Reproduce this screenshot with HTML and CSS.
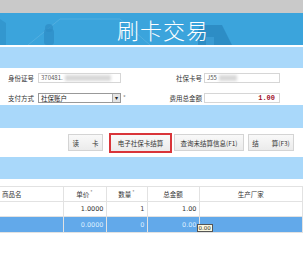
FILE: index.html
```html
<!DOCTYPE html>
<html lang="zh-CN">
<head>
  <meta charset="UTF-8">
  <title>刷卡交易</title>
  <link rel="stylesheet" href="styles.css">
</head>
<body>
  <div class="topbar"></div>

  <!-- Banner with faint illustrations -->
  <header class="banner">
    <svg class="banner-art" width="303" height="32" viewBox="0 0 303 32">
      <path d="M0 6 L6 10 L6 32 L0 32 Z" fill="#2f8fc6" opacity="0.6"/>
      <path d="M28 32 L60 6 L120 6 L150 32" fill="none" stroke="#5db4e3" stroke-width="1" opacity="0.7"/>
      <rect x="44" y="16" width="10" height="16" rx="3" fill="#2e8cc4" opacity="0.7"/>
      <circle cx="49" cy="15" r="4" fill="#2e8cc4" opacity="0.7"/>
      <path d="M198 32 L198 18 Q198 12 206 12 L222 12 L232 32 Z" fill="#2a86bd" opacity="0.75"/>
      <path d="M206 24 L214 24 L214 32 L206 32 Z" fill="#3a9bd3"/>
    </svg>
    <h1 class="banner-title">刷卡交易</h1>
  </header>
  <div class="sep"></div>

  <div class="band band-top"></div>

  <!-- Patient info -->
  <div class="info">
    <div class="info-row">
      <label class="lbl">身份证号</label>
      <div class="field field-left">370481.<span class="blur"></span></div>
      <span class="star"></span>
      <label class="lbl lbl-right">社保卡号</label>
      <div class="field field-right">J55<span class="blur blur-short"></span></div>
    </div>
    <div class="info-row">
      <label class="lbl">支付方式</label>
      <div class="field field-left select">社保账户<span class="drop">&#9662;</span></div>
      <span class="star">*</span>
      <label class="lbl lbl-right">费用总金额</label>
      <div class="field field-right amount">1.00</div>
    </div>
  </div>

  <div class="band band-mid"></div>

  <!-- Action buttons -->
  <div class="actions">
    <button class="btn btn-read">读&emsp;&emsp;卡</button>
    <button class="btn btn-ecard">电子社保卡结算</button>
    <button class="btn btn-query">查询未结算信息(F1)</button>
    <button class="btn btn-settle">结&emsp;&emsp;算(F3)</button>
  </div>

  <div class="band band-bottom"></div>

  <!-- Item table -->
  <table class="items">
    <thead>
      <tr>
        <th class="c-name">商品名</th>
        <th class="c-price">单价<sup>*</sup></th>
        <th class="c-qty">数量<sup>*</sup></th>
        <th class="c-total">总金额</th>
        <th class="c-maker">生产厂家</th>
      </tr>
    </thead>
    <tbody>
      <tr>
        <td></td>
        <td class="num">1.0000</td>
        <td class="num">1</td>
        <td class="num">1.00</td>
        <td></td>
      </tr>
      <tr class="selected">
        <td></td>
        <td class="num">0.0000</td>
        <td class="num">0</td>
        <td class="num">0.00</td>
        <td class="tip-cell"><span class="tip">0.00</span></td>
      </tr>
    </tbody>
  </table>
</body>
</html>
```

FILE: styles.css
```css
/* Reset */
* {
  box-sizing: border-box;
  margin: 0;
  padding: 0;
}

body {
  font-family: "Noto Sans CJK SC", "DejaVu Sans", sans-serif;
  font-size: 8px;
  color: #333;
  background-color: #fff;
  width: 303px;
  overflow: hidden;
}

/* Top gray strip */
.topbar {
  height: 13px;
  background-color: #c9c9c9;
}

/* Banner */
.banner {
  position: relative;
  height: 32px;
  background-color: #3ba4dc;
  overflow: hidden;
}

.banner-art {
  position: absolute;
  left: 0;
  top: 0;
}

.banner-title {
  position: relative;
  padding-left: 117px;
  font-size: 22px;
  font-weight: 300;
  line-height: 32px;
  letter-spacing: 1px;
  color: #fff;
  font-family: "Noto Sans CJK SC", sans-serif;
}

.sep {
  height: 2px;
  background-color: #fff;
}

/* Light blue bands */
.band {
  background-color: #a9d8fa;
}

.band-top { height: 21px; }
.band-mid { height: 23px; }
.band-bottom { height: 22px; }

/* Info form */
.info {
  height: 37px;
  padding-top: 5px;
}

.info-row {
  display: flex;
  align-items: center;
  height: 10px;
  margin-bottom: 10px;
  padding-left: 8px;
}

.lbl {
  width: 30px;
  font-size: 6.5px;
  color: #333;
  white-space: nowrap;
}

.lbl-right {
  width: 42px;
  text-align: right;
  margin-right: 2px;
}

.field {
  height: 10px;
  border: 1px solid #d6d6d6;
  background: #fff;
  font-size: 6px;
  line-height: 8px;
  padding-left: 2px;
  color: #555;
  display: flex;
  align-items: center;
}

.field-left { width: 83px; }
.field-right { width: 76px; }

.blur {
  display: inline-block;
  width: 46px;
  height: 6px;
  margin-left: 2px;
  background: #d8d8d8;
  filter: blur(1.5px);
}

.blur-short { width: 18px; }

.select {
  position: relative;
  border-color: #999;
  font-size: 6.5px;
  color: #222;
}

.drop {
  position: absolute;
  right: 0;
  top: 0;
  width: 8px;
  height: 8px;
  background: #e4e4e4;
  border-left: 1px solid #aaa;
  font-size: 6px;
  line-height: 8px;
  text-align: center;
  color: #222;
}

.star {
  width: 39px;
  font-size: 6px;
  color: #888;
  padding-left: 2px;
  align-self: flex-start;
}

.amount {
  justify-content: flex-end;
  padding-right: 4px;
  font-family: "Liberation Mono", monospace;
  font-weight: bold;
  font-size: 7px;
  color: #a0102a;
}

/* Buttons row */
.actions {
  height: 29px;
  display: flex;
  align-items: center;
  padding-left: 68px;
  gap: 4px;
}

.btn {
  height: 17px;
  border: 1px solid #d4d4d4;
  background: linear-gradient(#f9f9f9, #ebebeb);
  font-family: "Noto Sans CJK SC", sans-serif;
  font-size: 6.5px;
  color: #333;
  padding: 0;
  white-space: nowrap;
}

.btn-read { width: 35px; }

.btn-ecard {
  width: 63px;
  height: 20px;
  border: 2px solid #d9353a;
  margin-left: 2px;
}

.btn-query { width: 70px; margin-left: -2px; }
.btn-settle { width: 46px; }

/* Table */
.items {
  width: 303px;
  border-collapse: collapse;
  margin-top: 7px;
  table-layout: fixed;
}

.items th,
.items td {
  height: 15px;
  border-right: 1px solid #e2e2e2;
  border-bottom: 1px solid #e2e2e2;
  font-size: 6.5px;
  font-weight: normal;
  padding: 0 2px;
  color: #333;
}

.items th {
  border-top: 1px solid #e2e2e2;
  text-align: center;
}

.items th sup {
  font-size: 5px;
  color: #888;
  margin-left: 1px;
}

.c-name { width: 63px; text-align: left !important; }
.c-price { width: 43px; }
.c-qty { width: 41px; }
.c-total { width: 52px; }

.items .num {
  text-align: right;
  font-family: "DejaVu Sans", sans-serif;
  font-size: 6.5px;
}

.items .selected td {
  background-color: #62a9ea;
  color: #dbeeff;
  height: 16px;
}

.tip-cell {
  position: relative;
}

.tip {
  position: absolute;
  left: -3px;
  top: 7px;
  padding: 0 1px;
  background: #fbf8e0;
  border: 1px solid #555;
  font-family: "DejaVu Sans", sans-serif;
  font-size: 5.5px;
  line-height: 6px;
  color: #222;
}
```
